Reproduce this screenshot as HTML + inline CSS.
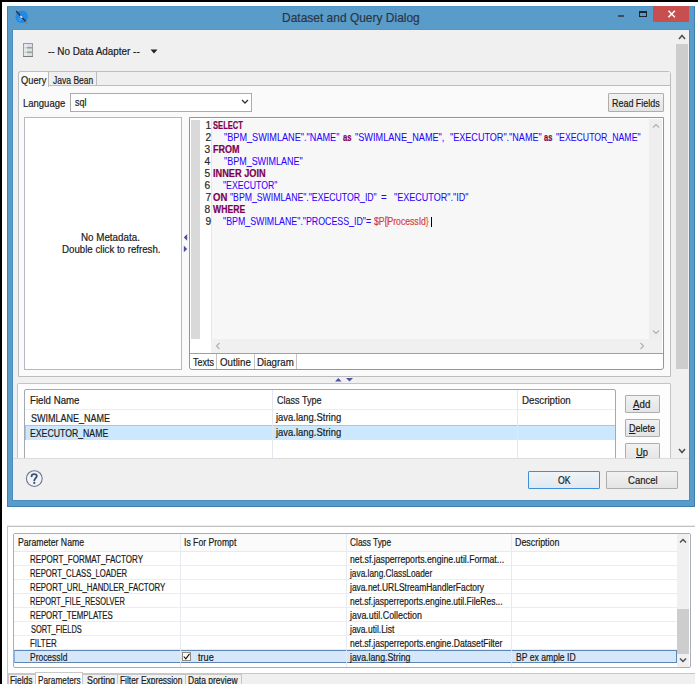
<!DOCTYPE html>
<html><head><meta charset="utf-8">
<style>
*{box-sizing:border-box;margin:0;padding:0}
html,body{width:698px;height:684px;overflow:hidden;background:#fff;position:relative;font-family:"Liberation Sans",sans-serif;color:#000}
.a{position:absolute}
.t{position:absolute;white-space:pre;transform-origin:0 0;-webkit-text-stroke:0.2px currentColor}
.btn{position:absolute;border:1px solid #adadad;background:linear-gradient(#f2f2f2,#e4e4e4);border-radius:1px}
.code{position:absolute;white-space:pre;font-size:9px;line-height:12px;color:#2a00ff}
.kw{color:#7f0055;font-weight:bold}
</style></head><body>
<!-- black borders -->
<div class="a" style="left:0;top:0;width:698px;height:2px;background:#000"></div>
<div class="a" style="left:0;top:0;width:2px;height:684px;background:#000"></div>

<!-- window frame -->
<div class="a" style="left:7px;top:6px;width:688px;height:501px;background:#5a9cc9;border:1px solid #3a7fb0;border-top-color:#5096c6"></div>
<svg class="a" style="left:13px;top:8px" width="18" height="18"><circle cx="8.7" cy="8.7" r="6.3" fill="#1f8ae8"/><path d="M5.2 11.2 L8 9.5 M6 13 L9.2 10.8" stroke="#7fbef0" stroke-width="0.6"/><path d="M3.6 3.6 L13.6 14.5" stroke="#3a2e26" stroke-width="1.45" stroke-linecap="round"/><path d="M7.4 7.8 L9.3 9.9" stroke="#f0f0f0" stroke-width="1.3"/><path d="M12.6 13.4 L13.8 14.6" stroke="#b0b0b0" stroke-width="1.2"/></svg>
<div class="a" style="left:618px;top:15px;width:6px;height:2px;background:#3d4d5e"></div>
<div class="a" style="left:639px;top:11px;width:8px;height:6px;border:1px solid #1e2630;border-top-width:2px"></div>
<div class="a" style="left:653px;top:6px;width:36px;height:16px;background:#c74f4f"></div>
<svg class="a" style="left:653px;top:6px" width="36" height="16"><path d="M15.4 4.8 L21.9 11.3 M21.9 4.8 L15.4 11.3" stroke="#fff" stroke-width="1.5"/></svg>

<!-- content -->
<div class="a" style="left:12px;top:29px;width:678px;height:472px;border:1px solid #4a8dbd;border-top-color:#5596c4"></div>
<div class="a" style="left:13px;top:30px;width:676px;height:470px;background:#f0f0f0"></div>

<!-- dialog scrollbar -->
<div class="a" style="left:676px;top:30px;width:12px;height:428px;background:#f0f0f0"></div>
<div class="a" style="left:676px;top:44px;width:12px;height:325px;background:#cdcdcd"></div>
<svg class="a" style="left:676px;top:30px" width="12" height="14"><path d="M3 9 L6 5.5 L9 9" fill="none" stroke="#505050" stroke-width="1.6"/></svg>
<svg class="a" style="left:676px;top:444px" width="12" height="14"><path d="M3 5 L6 8.5 L9 5" fill="none" stroke="#505050" stroke-width="1.6"/></svg>

<!-- toolbar -->
<svg class="a" style="left:22px;top:42px" width="12" height="16"><rect x="1" y="1" width="10" height="14" fill="#9c9c9c"/><rect x="2" y="2" width="8" height="3" fill="#dcdcea"/><rect x="2" y="6.5" width="8" height="3" fill="#d6e4e6"/><rect x="2" y="11" width="8" height="3" fill="#cfe6d2"/><rect x="2" y="2" width="3" height="12" fill="#ececec" opacity="0.7"/><rect x="1" y="14" width="10" height="1" fill="#7a7a7a"/></svg>
<svg class="a" style="left:150px;top:49px" width="8" height="6"><path d="M0.5 0.5 L7.5 0.5 L4 4.5Z" fill="#222"/></svg>

<!-- tab folder -->
<div class="a" style="left:18px;top:71px;width:653px;height:306px;border:1px solid #bdbdbd;border-radius:3px 3px 0 0;background:#fafafa"></div>
<div class="a" style="left:19px;top:72px;width:651px;height:14px;background:#efefef;border-bottom:1px solid #bdbdbd"></div>
<div class="a" style="left:18px;top:71px;width:31px;height:16px;background:#fafafa;border:1px solid #bdbdbd;border-bottom:none;border-radius:3px 0 0 0"></div>
<div class="a" style="left:48px;top:71px;width:49px;height:15px;border:1px solid #bdbdbd;background:#efefef"></div>

<div class="a" style="left:70px;top:93px;width:182px;height:19px;background:#fff;border:1px solid #acacac"></div>
<svg class="a" style="left:241px;top:99px" width="8" height="6"><path d="M1 1 L4 4 L7 1" fill="none" stroke="#333" stroke-width="1.3"/></svg>

<div class="btn" style="left:608px;top:93px;width:56px;height:19px"></div>

<!-- metadata panel -->
<div class="a" style="left:24px;top:117px;width:158px;height:253px;background:#fff;border:1px solid #b4b8c0"></div>
<svg class="a" style="left:180px;top:230px" width="10" height="26"><path d="M7.2 4 L3.8 7.4 L7.2 10.8Z" fill="#4b4f9e"/><path d="M3.8 15.6 L7.2 19 L3.8 22.2Z" fill="#4b4f9e"/></svg>

<!-- editor -->
<div class="a" style="left:189px;top:117px;width:475px;height:253px;background:#fff;border:1px solid #959595;border-radius:0 0 3px 3px"></div>
<div class="a" style="left:190px;top:118px;width:473px;height:236px;background:#fff;border-bottom:1px solid #a0a0a0"></div>
<div class="a" style="left:191px;top:120px;width:9px;height:219px;background:#d9d9d9"></div>
<div class="a" style="left:211px;top:119px;width:438px;height:220px;background:#f7f7f7"></div>
<div class="a" style="left:649px;top:119px;width:13px;height:220px;background:#eeeeee"></div>
<div class="a" style="left:211px;top:119px;width:1px;height:220px;background:#e6e6e6"></div>
<div class="a" style="left:431px;top:217px;width:1px;height:10px;background:#000"></div>
<div class="a" style="left:385px;top:216px;width:3px;height:11px;border:1px solid #b8b8b8"></div>
<div class="a" style="left:211px;top:339px;width:451px;height:14px;background:#f0f0f0"></div>
<svg class="a" style="left:650px;top:121px" width="12" height="10"><path d="M3 6.5 L6 3.5 L9 6.5" fill="none" stroke="#b0b0b0" stroke-width="1.2"/></svg>
<svg class="a" style="left:650px;top:327px" width="12" height="10"><path d="M3 3.5 L6 6.5 L9 3.5" fill="none" stroke="#b0b0b0" stroke-width="1.2"/></svg>
<svg class="a" style="left:213px;top:341px" width="10" height="10"><path d="M6.5 2 L3.5 5 L6.5 8" fill="none" stroke="#b0b0b0" stroke-width="1.2"/></svg>
<svg class="a" style="left:637px;top:341px" width="10" height="10"><path d="M3.5 2 L6.5 5 L3.5 8" fill="none" stroke="#b0b0b0" stroke-width="1.2"/></svg>


<!-- editor bottom tabs -->
<div class="a" style="left:216px;top:354px;width:1px;height:15px;background:#c4c4c4"></div>
<div class="a" style="left:254px;top:354px;width:1px;height:15px;background:#c4c4c4"></div>
<div class="a" style="left:296px;top:354px;width:1px;height:15px;background:#c4c4c4"></div>

<!-- sash -->
<svg class="a" style="left:333px;top:376px" width="24" height="8"><path d="M2 5.6 L5.3 2 L8.6 5.6Z" fill="#4d55a0"/><path d="M13 2 L20 2 L16.5 5.6Z" fill="#4d55a0"/></svg>

<!-- fields panel -->
<div class="a" style="left:17px;top:383px;width:654px;height:80px;border:1px solid #c4c4c4;border-bottom:none;background:#fdfdfd;border-radius:2px 2px 0 0"></div>
<div class="a" style="left:24px;top:389px;width:592px;height:75px;background:#fff;border:1px solid #a4a8b0;border-radius:2px"></div>
<div class="a" style="left:25px;top:409px;width:590px;height:1px;background:#e8eef5"></div>
<div class="a" style="left:25px;top:425px;width:590px;height:15px;background:#cce8ff;border-top:1px solid #99c9ef;border-left:1px solid #99c9ef"></div>
<div class="a" style="left:272px;top:390px;width:1px;height:70px;background:#e3e8ee"></div>
<div class="a" style="left:517px;top:390px;width:1px;height:70px;background:#e3e8ee"></div>

<div class="btn" style="left:625px;top:395px;width:35px;height:18px"></div>
<div class="btn" style="left:625px;top:419px;width:35px;height:18px"></div>
<div class="btn" style="left:625px;top:443px;width:35px;height:18px"></div>

<!-- bottom bar -->
<div class="a" style="left:13px;top:458px;width:676px;height:42px;background:#f0f0f0;border-top:1px solid #dcdcdc"></div>
<svg class="a" style="left:24px;top:468px" width="22" height="22"><circle cx="10.3" cy="10.6" r="7.9" fill="#f4f4f6" stroke="#6b7896" stroke-width="1.1"/><path d="M7.6 8.2 C7.6 5.6 12.8 5.2 12.8 8.1 C12.8 9.9 10.6 10.2 10.3 12.3" fill="none" stroke="#3d5077" stroke-width="1.9" stroke-linecap="round"/><circle cx="10.3" cy="14.9" r="1.1" fill="#3d5077"/></svg>
<div class="btn" style="left:528px;top:471px;width:72px;height:18px;border-color:#3c8fd8;background:linear-gradient(#f0f4f9,#e1e8f0)"></div>
<div class="btn" style="left:606px;top:471px;width:72px;height:18px"></div>

<!-- bottom panel -->
<div class="a" style="left:7px;top:525px;width:688px;height:2px;background:linear-gradient(#f0f0f0,#e0e0e0)"></div>
<div class="a" style="left:7px;top:526px;width:688px;height:158px;border-left:1px solid #c4c4c4;border-top:1px solid #c4c4c4;background:#fff"></div>
<div class="a" style="left:13px;top:533px;width:678px;height:135px;background:#fff;border:1px solid #a9adb5;border-radius:2px"></div>
<div class="a" style="left:14px;top:534px;width:663px;height:18px;background:#fbfbfc;border-bottom:1px solid #e3ebf4"></div>
<div class="a" style="left:14px;top:565px;width:663px;height:1px;background:#ededed"></div>
<div class="a" style="left:14px;top:579px;width:663px;height:1px;background:#ededed"></div>
<div class="a" style="left:14px;top:593px;width:663px;height:1px;background:#ededed"></div>
<div class="a" style="left:14px;top:607px;width:663px;height:1px;background:#ededed"></div>
<div class="a" style="left:14px;top:621px;width:663px;height:1px;background:#ededed"></div>
<div class="a" style="left:14px;top:635px;width:663px;height:1px;background:#ededed"></div>
<div class="a" style="left:14px;top:649px;width:663px;height:1px;background:#ededed"></div>
<div class="a" style="left:180px;top:534px;width:1px;height:133px;background:#e6ebf1"></div>
<div class="a" style="left:346px;top:534px;width:1px;height:133px;background:#e6ebf1"></div>
<div class="a" style="left:511px;top:534px;width:1px;height:133px;background:#e6ebf1"></div>
<div class="a" style="left:14px;top:650px;width:663px;height:13px;background:#d5e8fb;border:1px solid #5f86b3;border-left-color:#8fb4dc"></div>
<div class="a" style="left:180px;top:650px;width:1px;height:13px;background:#e6ebf1;opacity:0.8"></div>
<div class="a" style="left:346px;top:650px;width:1px;height:13px;background:#e6ebf1;opacity:0.8"></div>
<div class="a" style="left:511px;top:650px;width:1px;height:13px;background:#e6ebf1;opacity:0.8"></div>
<div class="a" style="left:182px;top:652px;width:9px;height:9px;border:1px solid #8c8c82;background:#fbfbfb"></div>
<svg class="a" style="left:182px;top:652px" width="9" height="9"><path d="M1.8 4.5 L3.8 6.8 L7.5 1.8" fill="none" stroke="#111" stroke-width="1.1"/></svg>
<div class="a" style="left:677px;top:534px;width:12px;height:133px;background:#f0f0f0"></div>
<div class="a" style="left:677px;top:609px;width:12px;height:45px;background:#cdcdcd"></div>
<svg class="a" style="left:677px;top:535px" width="12" height="12"><path d="M3 7.5 L6 4.5 L9 7.5" fill="none" stroke="#505050" stroke-width="1.5"/></svg>
<svg class="a" style="left:677px;top:654px" width="12" height="12"><path d="M3 4.5 L6 7.5 L9 4.5" fill="none" stroke="#505050" stroke-width="1.5"/></svg>

<div class="a" style="left:8px;top:673px;width:687px;height:11px;background:#f0f0f0;border-top:1px solid #c8c8c8"></div>
<div class="a" style="left:8px;top:674px;width:28px;height:12px;background:#f0f0f0;border:1px solid #c8c8c8"></div>
<div class="a" style="left:35px;top:672px;width:48px;height:14px;background:#fff;border:1px solid #c8c8c8;border-bottom:none"></div>
<div class="a" style="left:82px;top:674px;width:36px;height:12px;background:#f0f0f0;border:1px solid #c8c8c8"></div>
<div class="a" style="left:117px;top:674px;width:69px;height:12px;background:#f0f0f0;border:1px solid #c8c8c8"></div>
<div class="a" style="left:185px;top:674px;width:57px;height:12px;background:#f0f0f0;border:1px solid #c8c8c8"></div>

<!-- texts -->
<div class="t" style="left:281.65px;top:7.80px;font-size:12.6px;font-weight:400;color:#2b3644;line-height:20px;transform:scaleX(0.9507)">Dataset and Query Dialog</div>
<div class="t" style="left:47.60px;top:41.20px;font-size:10.8px;font-weight:400;color:#1a1a1a;line-height:20px;transform:scaleX(0.9150)">-- No Data Adapter --</div>
<div class="t" style="left:20.70px;top:69.60px;font-size:10.8px;font-weight:400;color:#1a1a1a;line-height:20px;transform:scaleX(0.8600)">Query</div>
<div class="t" style="left:52.70px;top:69.60px;font-size:10.8px;font-weight:400;color:#1a1a1a;line-height:20px;transform:scaleX(0.7902)">Java Bean</div>
<div class="t" style="left:23.42px;top:92.50px;font-size:10.8px;font-weight:400;color:#1a1a1a;line-height:20px;transform:scaleX(0.8787)">Language</div>
<div class="t" style="left:74.60px;top:92.00px;font-size:10.8px;font-weight:400;color:#1a1a1a;line-height:20px;transform:scaleX(0.8286)">sql</div>
<div class="t" style="left:611.67px;top:92.60px;font-size:10.8px;font-weight:400;color:#1a1a1a;line-height:20px;transform:scaleX(0.8281)">Read Fields</div>
<div class="t" style="left:81.19px;top:226.80px;font-size:10.8px;font-weight:400;color:#1a1a1a;line-height:20px;transform:scaleX(0.9079)">No Metadata.</div>
<div class="t" style="left:62.00px;top:238.60px;font-size:10.8px;font-weight:400;color:#1a1a1a;line-height:20px;transform:scaleX(0.8972)">Double click to refresh.</div>
<div class="t" style="left:192.50px;top:351.50px;font-size:10.8px;font-weight:400;color:#1a1a1a;line-height:20px;transform:scaleX(0.8280)">Texts</div>
<div class="t" style="left:220.40px;top:351.50px;font-size:10.8px;font-weight:400;color:#1a1a1a;line-height:20px;transform:scaleX(0.9000)">Outline</div>
<div class="t" style="left:257.30px;top:351.50px;font-size:10.8px;font-weight:400;color:#1a1a1a;line-height:20px;transform:scaleX(0.9026)">Diagram</div>
<div class="t" style="left:29.60px;top:390.00px;font-size:10.8px;font-weight:400;color:#1a1a1a;line-height:20px;transform:scaleX(0.8963)">Field Name</div>
<div class="t" style="left:276.60px;top:390.00px;font-size:10.8px;font-weight:400;color:#1a1a1a;line-height:20px;transform:scaleX(0.8377)">Class Type</div>
<div class="t" style="left:521.50px;top:390.00px;font-size:10.8px;font-weight:400;color:#1a1a1a;line-height:20px;transform:scaleX(0.9019)">Description</div>
<div class="t" style="left:30.50px;top:407.90px;font-size:10.8px;font-weight:400;color:#1a1a1a;line-height:20px;transform:scaleX(0.8347)">SWIMLANE_NAME</div>
<div class="t" style="left:276.30px;top:407.00px;font-size:10.8px;font-weight:400;color:#1a1a1a;line-height:20px;transform:scaleX(0.8757)">java.lang.String</div>
<div class="t" style="left:29.69px;top:422.50px;font-size:10.8px;font-weight:400;color:#1a1a1a;line-height:20px;transform:scaleX(0.8063)">EXECUTOR_NAME</div>
<div class="t" style="left:276.30px;top:422.30px;font-size:10.8px;font-weight:400;color:#1a1a1a;line-height:20px;transform:scaleX(0.8757)">java.lang.String</div>
<div class="t" style="left:633.40px;top:393.50px;font-size:10.8px;font-weight:400;color:#1a1a1a;line-height:20px;transform:scaleX(0.9000)"><u>A</u>dd</div>
<div class="t" style="left:629.40px;top:417.70px;font-size:10.8px;font-weight:400;color:#1a1a1a;line-height:20px;transform:scaleX(0.8355)"><u>D</u>elete</div>
<div class="t" style="left:636.00px;top:441.70px;font-size:10.8px;font-weight:400;color:#1a1a1a;line-height:20px;transform:scaleX(0.8714)"><u>U</u>p</div>
<div class="t" style="left:557.80px;top:469.90px;font-size:10.8px;font-weight:400;color:#1a1a1a;line-height:20px;transform:scaleX(0.8063)">OK</div>
<div class="t" style="left:628.40px;top:469.90px;font-size:10.8px;font-weight:400;color:#1a1a1a;line-height:20px;transform:scaleX(0.8848)">Cancel</div>
<div class="t" style="left:18.13px;top:533.00px;font-size:10.0px;font-weight:400;color:#1a1a1a;line-height:20px;transform:scaleX(0.8667)">Parameter Name</div>
<div class="t" style="left:184.04px;top:533.20px;font-size:10.0px;font-weight:400;color:#1a1a1a;line-height:20px;transform:scaleX(0.8633)">Is For Prompt</div>
<div class="t" style="left:350.40px;top:533.20px;font-size:10.0px;font-weight:400;color:#1a1a1a;line-height:20px;transform:scaleX(0.8347)">Class Type</div>
<div class="t" style="left:515.01px;top:533.00px;font-size:10.0px;font-weight:400;color:#1a1a1a;line-height:20px;transform:scaleX(0.8878)">Description</div>
<div class="t" style="left:198.20px;top:647.50px;font-size:10.0px;font-weight:400;color:#1a1a1a;line-height:20px;transform:scaleX(0.9118)">true</div>
<div class="t" style="left:515.84px;top:647.50px;font-size:10.0px;font-weight:400;color:#1a1a1a;line-height:20px;transform:scaleX(0.8603)">BP ex ample ID</div>
<div class="t" style="left:9.56px;top:670.60px;font-size:10.0px;font-weight:400;color:#1a1a1a;line-height:20px;transform:scaleX(0.8385)">Fields</div>
<div class="t" style="left:37.67px;top:670.60px;font-size:10.0px;font-weight:400;color:#1a1a1a;line-height:20px;transform:scaleX(0.8255)">Parameters</div>
<div class="t" style="left:87.20px;top:670.60px;font-size:10.0px;font-weight:400;color:#1a1a1a;line-height:20px;transform:scaleX(0.8839)">Sorting</div>
<div class="t" style="left:120.16px;top:670.60px;font-size:10.0px;font-weight:400;color:#1a1a1a;line-height:20px;transform:scaleX(0.8384)">Filter Expression</div>
<div class="t" style="left:188.35px;top:670.60px;font-size:10.0px;font-weight:400;color:#1a1a1a;line-height:20px;transform:scaleX(0.8483)">Data preview</div>
<div class="t" style="left:29.70px;top:549.50px;font-size:10.0px;font-weight:400;color:#1a1a1a;line-height:20px;transform:scaleX(0.8021)">REPORT_FORMAT_FACTORY</div>
<div class="t" style="left:350.40px;top:549.50px;font-size:10.0px;font-weight:400;color:#1a1a1a;line-height:20px;transform:scaleX(0.8716)">net.sf.jasperreports.engine.util.Format...</div>
<div class="t" style="left:29.73px;top:563.50px;font-size:10.0px;font-weight:400;color:#1a1a1a;line-height:20px;transform:scaleX(0.7672)">REPORT_CLASS_LOADER</div>
<div class="t" style="left:350.40px;top:563.50px;font-size:10.0px;font-weight:400;color:#1a1a1a;line-height:20px;transform:scaleX(0.8313)">java.lang.ClassLoader</div>
<div class="t" style="left:29.72px;top:577.50px;font-size:10.0px;font-weight:400;color:#1a1a1a;line-height:20px;transform:scaleX(0.7826)">REPORT_URL_HANDLER_FACTORY</div>
<div class="t" style="left:350.40px;top:577.50px;font-size:10.0px;font-weight:400;color:#1a1a1a;line-height:20px;transform:scaleX(0.8465)">java.net.URLStreamHandlerFactory</div>
<div class="t" style="left:29.76px;top:591.50px;font-size:10.0px;font-weight:400;color:#1a1a1a;line-height:20px;transform:scaleX(0.7444)">REPORT_FILE_RESOLVER</div>
<div class="t" style="left:350.40px;top:591.50px;font-size:10.0px;font-weight:400;color:#1a1a1a;line-height:20px;transform:scaleX(0.8522)">net.sf.jasperreports.engine.util.FileRes...</div>
<div class="t" style="left:29.72px;top:605.50px;font-size:10.0px;font-weight:400;color:#1a1a1a;line-height:20px;transform:scaleX(0.7829)">REPORT_TEMPLATES</div>
<div class="t" style="left:350.40px;top:605.50px;font-size:10.0px;font-weight:400;color:#1a1a1a;line-height:20px;transform:scaleX(0.8913)">java.util.Collection</div>
<div class="t" style="left:30.50px;top:619.50px;font-size:10.0px;font-weight:400;color:#1a1a1a;line-height:20px;transform:scaleX(0.7456)">SORT_FIELDS</div>
<div class="t" style="left:350.40px;top:619.50px;font-size:10.0px;font-weight:400;color:#1a1a1a;line-height:20px;transform:scaleX(0.8491)">java.util.List</div>
<div class="t" style="left:29.71px;top:633.50px;font-size:10.0px;font-weight:400;color:#1a1a1a;line-height:20px;transform:scaleX(0.7906)">FILTER</div>
<div class="t" style="left:350.40px;top:633.50px;font-size:10.0px;font-weight:400;color:#1a1a1a;line-height:20px;transform:scaleX(0.8562)">net.sf.jasperreports.engine.DatasetFilter</div>
<div class="t" style="left:29.66px;top:647.50px;font-size:10.0px;font-weight:400;color:#1a1a1a;line-height:20px;transform:scaleX(0.8442)">ProcessId</div>
<div class="t" style="left:350.40px;top:647.50px;font-size:10.0px;font-weight:400;color:#1a1a1a;line-height:20px;transform:scaleX(0.8765)">java.lang.String</div>
<div class="t" style="left:205.60px;top:116.00px;font-size:10.2px;font-weight:400;color:#2a2a2a;line-height:20px;transform:scaleX(1.0000)">1</div>
<div class="t" style="left:205.60px;top:128.00px;font-size:10.2px;font-weight:400;color:#2a2a2a;line-height:20px;transform:scaleX(1.0000)">2</div>
<div class="t" style="left:204.60px;top:140.00px;font-size:10.2px;font-weight:400;color:#2a2a2a;line-height:20px;transform:scaleX(1.0000)">3</div>
<div class="t" style="left:204.60px;top:152.00px;font-size:10.2px;font-weight:400;color:#2a2a2a;line-height:20px;transform:scaleX(1.0000)">4</div>
<div class="t" style="left:204.60px;top:164.00px;font-size:10.2px;font-weight:400;color:#2a2a2a;line-height:20px;transform:scaleX(1.0000)">5</div>
<div class="t" style="left:204.60px;top:176.00px;font-size:10.2px;font-weight:400;color:#2a2a2a;line-height:20px;transform:scaleX(1.0000)">6</div>
<div class="t" style="left:205.60px;top:188.00px;font-size:10.2px;font-weight:400;color:#2a2a2a;line-height:20px;transform:scaleX(1.0000)">7</div>
<div class="t" style="left:204.60px;top:200.00px;font-size:10.2px;font-weight:400;color:#2a2a2a;line-height:20px;transform:scaleX(1.0000)">8</div>
<div class="t" style="left:205.60px;top:212.00px;font-size:10.2px;font-weight:400;color:#2a2a2a;line-height:20px;transform:scaleX(1.0000)">9</div>
<div class="t" style="left:213.00px;top:115.00px;font-size:10.6px;font-weight:700;color:#7f0055;line-height:20px;transform:scaleX(0.7167)">SELECT</div>
<div class="t" style="left:223.50px;top:127.00px;font-size:10.6px;font-weight:400;color:#2a00ff;line-height:20px;transform:scaleX(0.8619);-webkit-text-stroke:0.05px currentColor">"BPM_SWIMLANE"."NAME"</div>
<div class="t" style="left:343.00px;top:127.00px;font-size:10.6px;font-weight:700;color:#7f0055;line-height:20px;transform:scaleX(0.7250)">as</div>
<div class="t" style="left:355.00px;top:127.00px;font-size:10.6px;font-weight:400;color:#2a00ff;line-height:20px;transform:scaleX(0.8641);-webkit-text-stroke:0.05px currentColor">"SWIMLANE_NAME",</div>
<div class="t" style="left:450.00px;top:127.00px;font-size:10.6px;font-weight:400;color:#2a00ff;line-height:20px;transform:scaleX(0.8551);-webkit-text-stroke:0.05px currentColor">"EXECUTOR"."NAME"</div>
<div class="t" style="left:544.00px;top:127.00px;font-size:10.6px;font-weight:700;color:#7f0055;line-height:20px;transform:scaleX(0.7083)">as</div>
<div class="t" style="left:556.00px;top:127.00px;font-size:10.6px;font-weight:400;color:#2a00ff;line-height:20px;transform:scaleX(0.8233);-webkit-text-stroke:0.05px currentColor">"EXECUTOR_NAME"</div>
<div class="t" style="left:213.00px;top:139.00px;font-size:10.6px;font-weight:700;color:#7f0055;line-height:20px;transform:scaleX(0.8548)">FROM</div>
<div class="t" style="left:223.50px;top:151.00px;font-size:10.6px;font-weight:400;color:#2a00ff;line-height:20px;transform:scaleX(0.8473);-webkit-text-stroke:0.05px currentColor">"BPM_SWIMLANE"</div>
<div class="t" style="left:213.00px;top:163.00px;font-size:10.6px;font-weight:700;color:#7f0055;line-height:20px;transform:scaleX(0.8700)">INNER JOIN</div>
<div class="t" style="left:223.00px;top:175.00px;font-size:10.6px;font-weight:400;color:#2a00ff;line-height:20px;transform:scaleX(0.8227);-webkit-text-stroke:0.05px currentColor">"EXECUTOR"</div>
<div class="t" style="left:213.00px;top:187.00px;font-size:10.6px;font-weight:700;color:#7f0055;line-height:20px;transform:scaleX(0.9000)">ON</div>
<div class="t" style="left:230.10px;top:187.00px;font-size:10.6px;font-weight:400;color:#2a00ff;line-height:20px;transform:scaleX(0.8219);-webkit-text-stroke:0.05px currentColor">"BPM_SWIMLANE"."EXECUTOR_ID"</div>
<div class="t" style="left:380.50px;top:187.00px;font-size:10.6px;font-weight:400;color:#2a00ff;line-height:20px;transform:scaleX(0.9167);-webkit-text-stroke:0.05px currentColor">=</div>
<div class="t" style="left:393.80px;top:187.00px;font-size:10.6px;font-weight:400;color:#2a00ff;line-height:20px;transform:scaleX(0.8529);-webkit-text-stroke:0.05px currentColor">"EXECUTOR"."ID"</div>
<div class="t" style="left:213.00px;top:199.00px;font-size:10.6px;font-weight:700;color:#7f0055;line-height:20px;transform:scaleX(0.8154)">WHERE</div>
<div class="t" style="left:223.00px;top:211.00px;font-size:10.6px;font-weight:400;color:#2a00ff;line-height:20px;transform:scaleX(0.8331);-webkit-text-stroke:0.05px currentColor">"BPM_SWIMLANE"."PROCESS_ID"=</div>
<div class="t" style="left:374.00px;top:211.00px;font-size:10.6px;font-weight:400;color:#d63c3c;line-height:20px;transform:scaleX(0.8149)">$P<span style="color:#e05a5a">{</span>ProcessId<span style="color:#e05a5a">}</span></div>
</body></html>
